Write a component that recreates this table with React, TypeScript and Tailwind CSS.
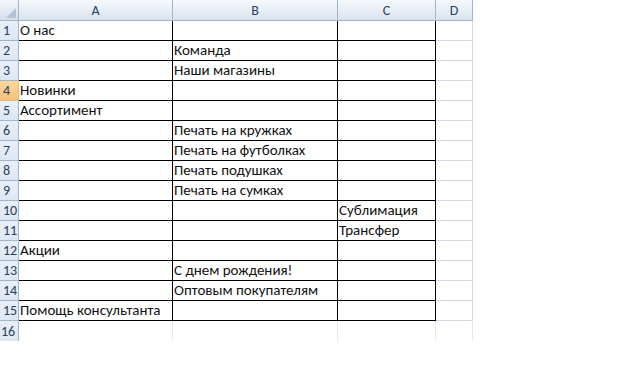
import React from 'react'

const COLS = [
  { key: 'A', w: 'w-[154px]' },
  { key: 'B', w: 'w-[165px]' },
  { key: 'C', w: 'w-[98px]' },
  { key: 'D', w: 'w-[37px]' },
]

const ROWS: string[][] = [
  ['О нас', '', ''],
  ['', 'Команда', ''],
  ['', 'Наши магазины', ''],
  ['Новинки', '', ''],
  ['Ассортимент', '', ''],
  ['', 'Печать на кружках', ''],
  ['', 'Печать на футболках', ''],
  ['', 'Печать подушках', ''],
  ['', 'Печать на сумках', ''],
  ['', '', 'Сублимация'],
  ['', '', 'Трансфер'],
  ['Акции', '', ''],
  ['', 'С днем рождения!', ''],
  ['', 'Оптовым покупателям', ''],
  ['Помощь консультанта', '', ''],
]

const font = { fontFamily: 'Calibri, Carlito, Lato, "Liberation Sans", sans-serif' }

export default function App() {
  return (
    <div className="h-[384px] w-[640px] overflow-hidden bg-white text-[15px] text-[#111]" style={font}>
      <div className="flex flex-col">
        {/* Шапка колонок */}
        <div className="flex h-[21px]">
          <div className="relative h-[21px] w-[19px] border-r border-b border-[#9eb6ce] bg-gradient-to-b from-[#f3f7fb] to-[#d5deea]">
            <div className="absolute right-[2px] bottom-[2px] h-0 w-0 border-b-[10px] border-l-[10px] border-b-[#b4c4d8] border-l-transparent" />
          </div>
          {COLS.map(c => (
            <div key={c.key}
              className={`${c.w} flex h-[21px] items-center justify-center border-r border-b border-[#9eb6ce] bg-gradient-to-b from-[#f6f9fc] to-[#dae3ee] text-[14px] text-[#27415f]`}>
              {c.key}
            </div>
          ))}
        </div>

        {/* Строки */}
        {ROWS.map((row, i) => (
          <div key={i} className="flex h-[20px]">
            <div className={`flex h-[20px] w-[19px] items-center border-r border-b pl-[3px] text-[14px] text-[#27415f] ${
              i === 3
                ? 'border-[#f2b654] bg-gradient-to-b from-[#fbd8a0] to-[#f7c27c]'
                : 'border-[#9eb6ce] bg-gradient-to-b from-[#e9eff7] to-[#dee7f1]'
            }`}>
              {i + 1}
            </div>
            {row.map((txt, j) => (
              <div key={j}
                className={`${COLS[j].w} flex h-[20px] items-end overflow-visible whitespace-nowrap border-r border-b border-black pb-[1px] pl-[1px] leading-[18px]`}>
                {txt}
              </div>
            ))}
            <div className="h-[20px] w-[37px] border-r border-b border-[#d0d7e5]" />
          </div>
        ))}

        {/* Строка 16 */}
        <div className="flex h-[20px]">
          <div className="flex h-[20px] w-[19px] items-center border-r border-[#9eb6ce] bg-gradient-to-b from-[#e9eff7] to-[#dee7f1] pl-[1px] text-[14px] text-[#27415f]">
            16
          </div>
          {COLS.map(c => (
            <div key={c.key} className={`${c.w} h-[20px] border-r border-[#e4e8ef]`} />
          ))}
        </div>
      </div>
    </div>
  )
}
